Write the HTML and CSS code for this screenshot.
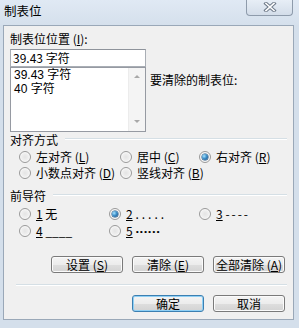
FILE: index.html
```html
<!DOCTYPE html>
<html lang="zh-CN">
<head>
<meta charset="utf-8">
<title>制表位</title>
<link rel="stylesheet" href="styles.css">
</head>
<body>
<div class="window">
  <div class="titlebar">
    <span class="title">制表位</span>
    <div class="close" aria-label="关闭">
      <svg width="14" height="10" viewBox="0 0 14 10">
        <path d="M3 1.5 L11 8.5 M11 1.5 L3 8.5" stroke="#6e7a89" stroke-width="3.6" stroke-linecap="square" fill="none"/>
        <path d="M3 1.5 L11 8.5 M11 1.5 L3 8.5" stroke="#ffffff" stroke-width="1.6" stroke-linecap="square" fill="none"/>
      </svg>
    </div>
  </div>
  <div class="client">
    <div class="field-label">制表位位置 (<u>I</u>):</div>
    <div class="input">39.43 字符</div>
    <div class="list-row">
      <div class="list">
        <div class="items">
          <div class="item">39.43 字符</div>
          <div class="item">40 字符</div>
        </div>
        <div class="scrollbar">
          <span class="arrow up"></span>
          <span class="arrow down"></span>
        </div>
      </div>
      <div class="clear-label">要清除的制表位:</div>
    </div>

    <div class="legend"><span>对齐方式</span><i class="rule"></i></div>
    <div class="radios align">
      <div class="radio"><span class="dot"></span><span>左对齐 (<u>L</u>)</span></div>
      <div class="radio"><span class="dot"></span><span>居中 (<u>C</u>)</span></div>
      <div class="radio"><span class="dot checked"></span><span>右对齐 (<u>R</u>)</span></div>
      <div class="radio"><span class="dot"></span><span>小数点对齐 (<u>D</u>)</span></div>
      <div class="radio"><span class="dot"></span><span>竖线对齐 (<u>B</u>)</span></div>
    </div>

    <div class="legend leader-legend"><span>前导符</span><i class="rule"></i></div>
    <div class="radios leader">
      <div class="radio"><span class="dot"></span><span><u>1</u> 无</span></div>
      <div class="radio"><span class="dot checked"></span><span><u>2</u> <span class="dots">.....</span></span></div>
      <div class="radio"><span class="dot"></span><span><u>3</u> <span class="dashes">----</span></span></div>
      <div class="radio"><span class="dot"></span><span><u>4</u> <span class="unders">____</span></span></div>
      <div class="radio"><span class="dot"></span><span><u>5</u> <span class="mdots">······</span></span></div>
    </div>

    <div class="btn-row first">
      <div class="btn">设置 (<u>S</u>)</div>
      <div class="btn">清除 (<u>E</u>)</div>
      <div class="btn">全部清除 (<u>A</u>)</div>
    </div>
    <div class="separator"></div>
    <div class="btn-row">
      <div class="btn default">确定</div>
      <div class="btn">取消</div>
    </div>
  </div>
</div>
</body>
</html>
```
FILE: styles.css
```css
* { box-sizing: border-box; }
html, body { margin: 0; padding: 0; overflow: hidden; }
body {
  width: 299px;
  height: 328px;
  font-family: "Noto Sans CJK SC", "Noto Sans", sans-serif;
  font-size: 12px;
  color: #000;
}
u { text-decoration: underline; text-underline-offset: 1px; }

.window {
  width: 299px;
  height: 328px;
  background: #d4dfeb;
  display: flex;
  flex-direction: column;
}
.titlebar {
  height: 25px;
  flex: none;
  display: flex;
  align-items: flex-start;
  padding: 0 6px 0 4px;
  background: linear-gradient(#e0e9f4, #d5e0ec);
}
.title { line-height: 14px; margin-top: 4px; font-size: 12.5px; }
.close {
  margin-left: auto;
  width: 47px;
  height: 16px;
  border: 1px solid #8e9bab;
  border-top: none;
  border-radius: 0 0 4px 4px;
  background: linear-gradient(#e7eef6, #d3dde9);
  display: flex;
  align-items: center;
  justify-content: center;
}
.close svg { display: block; margin-top: -1px; margin-left: 1px; }

.client {
  height: 295px;
  flex: none;
  margin: 0 5px 0 3px;
  border: 1px solid #9aa8b8;
  background: #f0f0f0;
  padding: 6px 6px 0 6px;
  display: flex;
  flex-direction: column;
}
.field-label { line-height: 14px; height: 14px; }
.input {
  margin-top: 3px;
  width: 136px;
  height: 18px;
  border: 1px solid #a9aeb5;
  border-top-color: #8e939b;
  background: #fff;
  padding: 0 2px;
  line-height: 16px;
}
.list-row { display: flex; align-items: flex-start; }
.list {
  width: 136px;
  height: 65px;
  border: 1px solid #969aa2;
  background: #fff;
  display: flex;
}
.items { flex: 1; padding: 0 3px; font-family: "Liberation Sans", "Noto Sans CJK SC", sans-serif; }
.item { line-height: 14px; }
.scrollbar {
  width: 17px;
  background: #f4f4f4;
  border-left: 1px solid #ececec;
  display: flex;
  flex-direction: column;
  align-items: center;
  justify-content: space-between;
  padding: 7px 0 8px;
}
.arrow { width: 0; height: 0; border-left: 3px solid transparent; border-right: 3px solid transparent; }
.arrow.up { border-bottom: 3px solid #a8a8a8; }
.arrow.down { border-top: 3px solid #a8a8a8; }
.clear-label { margin: 6px 0 0 4px; line-height: 14px; }

.legend { margin-top: 1px; height: 14px; line-height: 14px; display: flex; }
.legend .rule {
  flex: 1;
  margin: 5px 0 0 7px;
  height: 2px;
  border-top: 1px solid #d5dfe5;
  border-bottom: 1px solid #fff;
}
.leader-legend { margin-top: 8px; }

.radios { display: grid; margin-top: 2px; padding-left: 9px; }
.align { grid-template-columns: 101px 79px 1fr; grid-auto-rows: 16px; }
.leader { grid-template-columns: 90px 90px 1fr; grid-template-rows: 17px 18px; }
.radio { display: flex; align-items: center; gap: 5px; white-space: nowrap; line-height: 14px; }
.dot {
  flex: none;
  width: 12px;
  height: 12px;
  border-radius: 50%;
  border: 1px solid #9a9a9a;
  background: radial-gradient(circle at 50% 50%, #e4e4e4 0, #eeeeee 45%, #fbfbfb 100%);
  box-shadow: inset 0 0 0 1px #f7f7f7;
  position: relative;
}
.dot.checked::after {
  content: "";
  position: absolute;
  left: 2px;
  top: 2px;
  width: 6px;
  height: 6px;
  border-radius: 50%;
  background: radial-gradient(circle at 35% 35%, #a9e4ff 0, #3d8fc9 45%, #13467a 100%);
  box-shadow: 0 0 0 0.5px #1b4f7f;
}
.dots { letter-spacing: 3px; }
.dashes { letter-spacing: 2px; }
.unders { letter-spacing: 0; }
.mdots { font-family: "Noto Sans", sans-serif; font-weight: bold; font-size: 13px; letter-spacing: 0.5px; }

.btn-row { display: flex; justify-content: flex-end; gap: 9px; margin-right: 2px; margin-top: 9px; }
.btn-row.first { margin-top: 16px; }
.btn {
  width: 72px;
  height: 17px;
  border: 1px solid #7a7a7a;
  border-radius: 3px;
  background: linear-gradient(#f4f4f4 0%, #ececec 50%, #dedede 51%, #d3d3d3 100%);
  box-shadow: inset 0 0 0 1px #fbfbfb;
  display: flex;
  align-items: center;
  justify-content: center;
  line-height: 14px;
  white-space: nowrap;
}
.btn.default {
  border-color: #3c7fb1;
  box-shadow: inset 0 0 0 1px #8fd0f5;
}
.separator {
  margin: 11px 0 0 6px;
  height: 2px;
  border-top: 1px solid #d5dfe5;
  border-bottom: 1px solid #fff;
}
```
